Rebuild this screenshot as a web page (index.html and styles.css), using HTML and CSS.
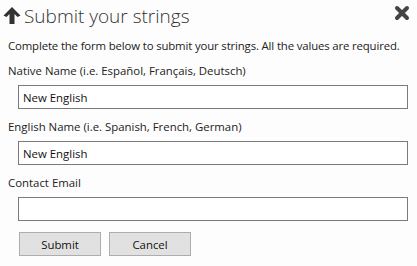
FILE: index.html
```html
<!DOCTYPE html>
<html>
<head lang="en">
    <meta charset="UTF-8">
    <title>Submit your strings</title>
    <link rel="stylesheet" href="styles.css">
</head>
<body>
<div class="dialog">
    <div class="head">
        <h1 class="title">
            <svg class="icon-up" width="18" height="18" viewBox="0 0 18 18">
                <path d="M9 0 L17.5 8.5 L14.5 10 L11.5 7 L11.5 17 L6.5 17 L6.5 7 L3.5 10 L0.5 8.5 Z" fill="#333"/>
            </svg>
            Submit your strings
        </h1>
        <svg class="icon-close" width="16" height="16" viewBox="0 0 16 16">
            <path d="M3 3 L13 13 M13 3 L3 13" stroke="#444" stroke-width="4" stroke-linecap="round"/>
        </svg>
    </div>
    <p class="intro">Complete the form below to submit your strings. All the values are required.</p>
    <form class="form">
        <label class="field">
            <span class="label">Native Name (i.e. Español, Français, Deutsch)</span>
            <input type="text" value="New English">
        </label>
        <label class="field">
            <span class="label">English Name (i.e. Spanish, French, German)</span>
            <input type="text" value="New English">
        </label>
        <label class="field">
            <span class="label">Contact Email</span>
            <input type="text" value="">
        </label>
        <div class="buttons">
            <button type="button">Submit</button>
            <button type="button">Cancel</button>
        </div>
    </form>
</div>
</body>
</html>
```

FILE: styles.css
```css
* {
    padding: 0;
    margin: 0;
    box-sizing: border-box;
}
body {
    background-color: #fdfdfd;
    color: #222;
    font-family: "Open Sans", "Noto Sans", sans-serif;
    font-size: 11.4px;
}
.dialog {
    width: 417px;
    height: 266px;
    padding: 4px 8px 0 8px;
}
.head {
    display: flex;
    justify-content: space-between;
    align-items: flex-start;
    height: 34px;
}
.title {
    display: flex;
    align-items: center;
    gap: 3px;
    margin-left: -5px;
    font-size: 19px;
    font-weight: 300;
    color: #333;
    line-height: 24px;
}
.icon-close {
    margin-top: 1px;
    margin-right: -1px;
}
.intro {
    line-height: 16px;
    white-space: nowrap;
    letter-spacing: -0.15px;
}
.field {
    display: block;
    margin-top: 10px;
}
.field:first-child {
    margin-top: 9px;
}
.label {
    display: block;
    line-height: 16px;
}
.field input {
    display: block;
    width: 390px;
    height: 24px;
    margin: 6px 0 0 10px;
    padding: 0 4px;
    border: 1px solid #7a7a7a;
    background-color: #fff;
    font-family: inherit;
    font-size: 11.4px;
    color: #111;
    outline: none;
}
.buttons {
    display: flex;
    gap: 8px;
    margin: 11px 0 0 11px;
}
.buttons button {
    width: 82px;
    height: 24px;
    border: 1px solid #adadad;
    background-color: #e1e1e1;
    font-family: inherit;
    font-size: 11.4px;
    color: #111;
}
```
